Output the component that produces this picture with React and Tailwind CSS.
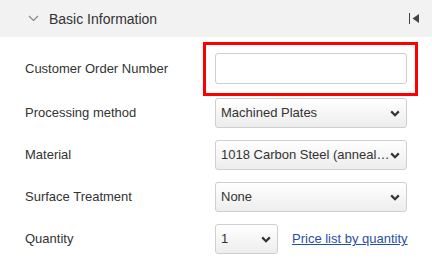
const Chevron = () => (
  <svg width="10" height="7" viewBox="0 0 10 7" className="shrink-0">
    <path d="M1.2 1.4 L5 5.2 L8.8 1.4" fill="none" stroke="#333" strokeWidth="2.2" />
  </svg>
);

const FakeSelect = ({ value, width = "w-[192px]" }) => (
  <div
    className={`${width} h-[30px] flex items-center justify-between pl-[5px] pr-[6px] border border-[#cfcfcf] rounded-[3px] bg-gradient-to-b from-white to-[#ededed] text-[13px] text-[#333]`}
  >
    <span className="whitespace-nowrap">{value}</span>
    <Chevron />
  </div>
);

const Row = ({ label, children }) => (
  <div className="flex items-center h-[30px]">
    <div className="w-[215px] pl-[25px] text-[13px] text-[#333]">{label}</div>
    {children}
  </div>
);

export default function App() {
  return (
    <div className="w-[432px] h-[270px] bg-white overflow-hidden font-['Liberation_Sans',Arial,sans-serif]">
      {/* Header */}
      <div className="h-[37px] bg-[#f2f2f2] flex items-center pl-[28px] pr-[13px]">
        <svg width="11" height="7" viewBox="0 0 11 7">
          <path d="M1 1 L5.5 5.5 L10 1" fill="none" stroke="#888" strokeWidth="1.2" />
        </svg>
        <span className="ml-[10px] mt-[1px] text-[14px] text-[#333]">Basic Information</span>
        <div className="ml-auto flex items-center gap-[2px]">
          <div className="w-[1px] h-[11px] bg-[#444]" />
          <svg width="7" height="9" viewBox="0 0 7 9">
            <path d="M7 0 L0.5 4.5 L7 9 Z" fill="#444" />
          </svg>
        </div>
      </div>

      {/* Customer Order Number */}
      <div className="flex items-center mt-[5px] h-[54px]">
        <div className="w-[203px] pl-[25px] text-[13px] text-[#333]">Customer Order Number</div>
        <div className="w-[215px] h-[54px] border-[3px] border-[#ff0000] pl-[9px] pt-[8px]">
          <input
            type="text"
            className="w-[192px] h-[31px] border border-[#cfcfcf] rounded-[3px] bg-white outline-none"
          />
        </div>
      </div>

      <div className="flex flex-col gap-[12px] mt-[2px]">
        <Row label="Processing method">
          <FakeSelect value="Machined Plates" />
        </Row>
        <Row label="Material">
          <FakeSelect value="1018 Carbon Steel (anneal…" />
        </Row>
        <Row label="Surface Treatment">
          <FakeSelect value="None" />
        </Row>
        <Row label="Quantity">
          <FakeSelect value="1" width="w-[63px]" />
          <a href="#" className="ml-[14px] text-[13px] text-[#1f4fa6] underline">
            Price list by quantity
          </a>
        </Row>
      </div>
    </div>
  );
}
